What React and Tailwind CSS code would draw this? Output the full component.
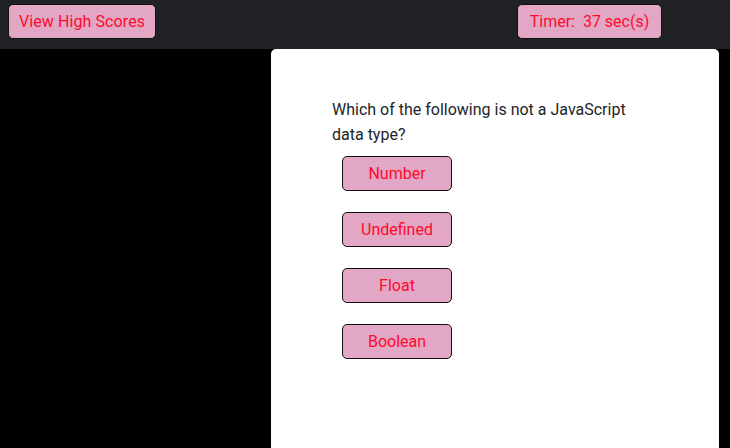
const ANSWERS = ["Number", "Undefined", "Float", "Boolean"];

const pinkBtn =
  "h-[35px] rounded-[5px] border border-[#111] bg-[#e2a7c5] text-[16px] text-[#ff0a2d]";

export default function App() {
  return (
    <div className="flex h-[448px] w-[730px] flex-col overflow-hidden bg-black font-['Roboto',sans-serif]">
      <header className="flex h-[49px] shrink-0 items-start bg-[#1f2124] pt-1 pl-2">
        <button className={`${pinkBtn} w-[148px] tracking-[0.1px]`}>View High Scores</button>
        <button className={`${pinkBtn} ml-[361px] w-[145px] whitespace-pre`}>
          {"Timer:  37 sec(s)"}
        </button>
      </header>

      <main className="flex flex-1">
        <section className="ml-[271px] w-[448px] rounded-t-[5px] bg-white pt-[48px] pl-[61px] text-[#212529]">
          <p className="w-[310px] text-[16px] leading-[25px]">
            Which of the following is not a JavaScript data type?
          </p>
          <div className="mt-[9px] flex flex-col gap-[21px] pl-[10px]">
            {ANSWERS.map((a) => (
              <button key={a} className={`${pinkBtn} w-[110px]`}>
                {a}
              </button>
            ))}
          </div>
        </section>
      </main>
    </div>
  );
}
